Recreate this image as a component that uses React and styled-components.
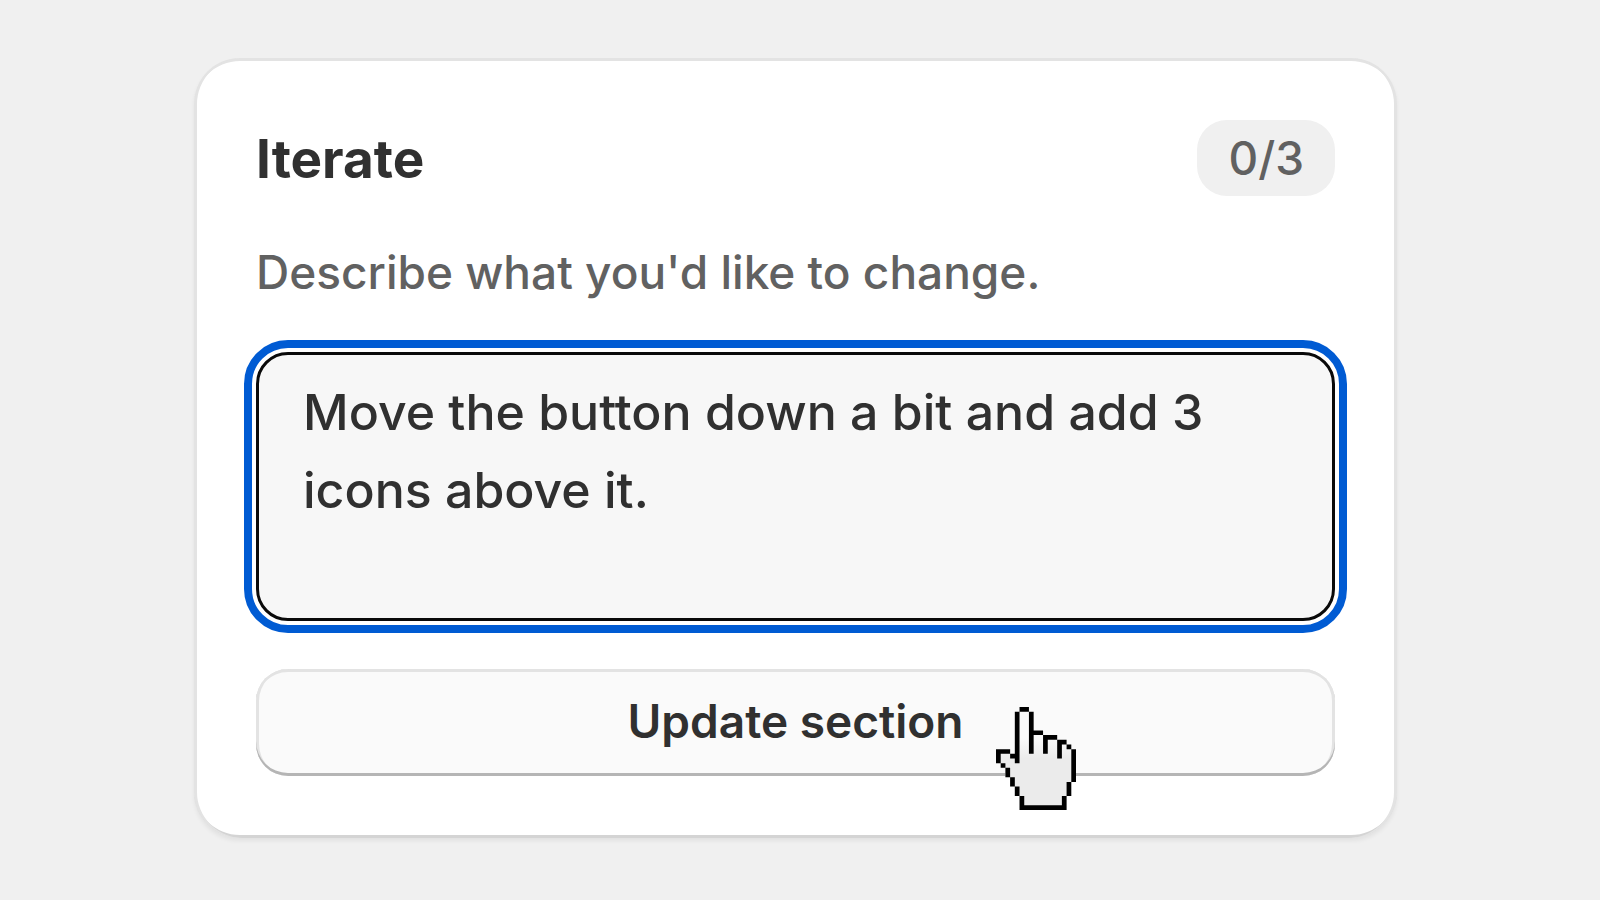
import React from "react";
import styled, { createGlobalStyle } from "styled-components";

const GlobalStyle = createGlobalStyle`
  * { box-sizing: border-box; }
  body { margin: 0; background: #f0f0f0; font-family: Inter, "Liberation Sans", sans-serif; }
`;

const Page = styled.main`
  min-height: 100vh;
  display: flex;
  align-items: flex-start;
  justify-content: center;
  padding: 58px 203px 58px 194px;
`;

const Card = styled.section`
  flex: 1;
  padding: 62px;
  border-radius: 46px;
  background: #ffffff;
  box-shadow:
    inset 3px 0 0 #e3e3e3,
    inset -3px 0 0 #e3e3e3,
    inset 0 -3px 0 #d4d4d4,
    inset 0 3px 0 #e3e3e3,
    0 3px 4px #0000000f;
`;

const Header = styled.header`
  display: flex;
  align-items: flex-start;
  justify-content: space-between;
`;

const Title = styled.h1`
  margin: 0;
  font-size: 53px;
  line-height: 78px;
  font-weight: 700;
  color: #303030;
`;

const Counter = styled.span`
  padding: 0 31px;
  border-radius: 30px;
  background: #f0f0f0;
  color: #616161;
  font-size: 46px;
  font-weight: 500;
  line-height: 76px;
`;

const Label = styled.label`
  display: block;
  margin: 44px 0 50px;
  font-size: 46px;
  font-weight: 500;
  line-height: 60px;
  color: #616161;
`;

const Prompt = styled.textarea`
  display: block;
  width: 100%;
  height: 269px;
  padding: 18px 44px;
  border: 3px solid #0a0a0a;
  border-radius: 32px;
  outline: 8px solid #005bd3;
  outline-offset: 4px;
  background: #f7f7f7;
  color: #303030;
  font-family: inherit;
  font-size: 50px;
  font-weight: 500;
  line-height: 78px;
  resize: none;
`;

const ButtonRow = styled.div`
  position: relative;
  margin-top: 48px;
`;

const UpdateButton = styled.button`
  display: block;
  width: 100%;
  height: 107px;
  padding: 0 0 4px;
  border: 0;
  border-radius: 32px;
  background: #fafafa;
  box-shadow:
    inset 0 -3px 0 #b5b5b5,
    inset 3px 0 0 #e3e3e3,
    inset -3px 0 0 #e3e3e3,
    inset 0 3px 0 #e3e3e3;
  color: #303030;
  font-family: inherit;
  font-size: 46px;
  font-weight: 600;
`;

const Pointer = styled.svg`
  position: absolute;
  top: 38px;
  left: calc(50% + 200px);
  width: 80px;
  height: 103px;
  pointer-events: none;
`;

function HandPointer() {
  return (
    <Pointer viewBox="0 0 17 22" preserveAspectRatio="none" aria-hidden="true">
      <defs>
        <linearGradient id="hand" x1="0" y1="0" x2="0" y2="1">
          <stop offset="0.3" stopColor="#fafafa" />
          <stop offset="0.5" stopColor="#ebebeb" />
        </linearGradient>
      </defs>
      <path
        fill="url(#hand)"
        d="M5 0H7V1H8V5H10V6H13V7H15V8H16V9H17V16H16V19H15V22H5V19H4V17H3V15H2V13H1V12H0V9H3V10H4V1H5Z"
      />
      <path
        fill="#000000"
        d="M5 0H7V1H5ZM4 1H5V12H4ZM7 1H8V10H7ZM8 5H10V6H8ZM10 6H13V7H11V10H10ZM13 7H15V8H14V11H13ZM15 8H16V9H15ZM16 9H17V16H16ZM15 16H16V19H15ZM14 19H15V22H5V19H6V21H14ZM4 17H5V19H4ZM3 15H4V17H3ZM2 13H3V15H2ZM1 12H2V13H1ZM0 9H3V10H1V12H0ZM3 10H4V11H3Z"
      />
    </Pointer>
  );
}

export default function App() {
  return (
    <>
      <GlobalStyle />
      <Page>
        <Card>
          <Header>
            <Title>Iterate</Title>
            <Counter>0/3</Counter>
          </Header>
          <Label htmlFor="prompt">Describe what you'd like to change.</Label>
          <Prompt id="prompt" spellCheck={false} defaultValue="Move the button down a bit and add 3 icons above it." />
          <ButtonRow>
            <UpdateButton type="button">Update section</UpdateButton>
            <HandPointer />
          </ButtonRow>
        </Card>
      </Page>
    </>
  );
}
